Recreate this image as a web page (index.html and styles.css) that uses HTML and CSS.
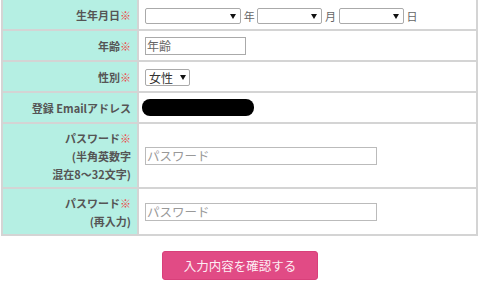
FILE: index.html
```html
<!DOCTYPE html>
<html lang="ja">
<head>
    <meta charset="UTF-8">
    <meta name="viewport" content="width=device-width, initial-scale=1.0">
    <title>会員登録</title>
    <link rel="stylesheet" href="styles.css">
</head>
<body>
    <form class="entry-form">
        <table class="form-table">
            <tr class="row-short">
                <th>生年月日<span class="req">※</span></th>
                <td>
                    <span class="select-wrap year"><select><option></option></select></span>
                    <span class="unit">年</span>
                    <span class="select-wrap month"><select><option></option></select></span>
                    <span class="unit">月</span>
                    <span class="select-wrap day"><select><option></option></select></span>
                    <span class="unit">日</span>
                </td>
            </tr>
            <tr class="row-short">
                <th>年齢<span class="req">※</span></th>
                <td><input type="text" class="input-age" value="年齢"></td>
            </tr>
            <tr class="row-short">
                <th>性別<span class="req">※</span></th>
                <td>
                    <span class="select-wrap gender"><select><option>女性</option><option>男性</option></select></span>
                </td>
            </tr>
            <tr class="row-short">
                <th>登録 Emailアドレス</th>
                <td><span class="masked"></span></td>
            </tr>
            <tr class="row-pass">
                <th>パスワード<span class="req">※</span><br>(半角英数字<br>混在8～32文字)</th>
                <td><input type="password" class="input-pass" placeholder="パスワード"></td>
            </tr>
            <tr class="row-repass">
                <th>パスワード<span class="req">※</span><br>(再入力)</th>
                <td><input type="password" class="input-pass" placeholder="パスワード"></td>
            </tr>
        </table>
        <div class="form-actions">
            <button type="submit" class="btn-confirm">入力内容を確認する</button>
        </div>
    </form>
</body>
</html>
```

FILE: styles.css
```css
body {
    margin: 0;
    background: #fff;
    font-family: "Noto Sans CJK JP", "Noto Sans", sans-serif;
    color: #555;
}
.form-table {
    width: 477px;
    margin: -2px 0 0 1px;
    border: 1px solid #d4d4d4;
    border-collapse: separate;
    border-spacing: 0;
    table-layout: fixed;
}
.form-table th,
.form-table td {
    border: 1px solid #d4d4d4;
    padding: 0;
    vertical-align: middle;
}
.form-table th {
    box-sizing: border-box;
    width: 136px;
    padding-right: 6px;
    background: #b5efe3;
    text-align: right;
    font-size: 11px;
    font-weight: bold;
    line-height: 18px;
    color: #555;
}
.form-table td {
    padding-left: 6px;
    font-size: 12px;
}
.row-short td { height: 29px; }
.row-pass td { height: 63px; }
.row-repass td { height: 45px; }
.req {
    color: #ee4444;
}
.select-wrap {
    position: relative;
    display: inline-block;
    vertical-align: middle;
}
.select-wrap select {
    appearance: none;
    -webkit-appearance: none;
    display: block;
    box-sizing: border-box;
    height: 16px;
    margin: 0;
    padding: 0 0 0 3px;
    border: 1px solid #aaa;
    border-radius: 2px;
    background: #fff;
    font-family: inherit;
    font-size: 12px;
    line-height: 14px;
    color: #333;
}
.select-wrap::after {
    content: "";
    position: absolute;
    right: 5px;
    top: 6px;
    border-left: 3px solid transparent;
    border-right: 3px solid transparent;
    border-top: 5px solid #111;
    pointer-events: none;
}
.select-wrap.year select { width: 96px; }
.select-wrap.month select { width: 65px; }
.select-wrap.day select { width: 65px; }
.select-wrap.gender select {
    width: 45px;
    height: 17px;
}
.select-wrap.gender::after { right: 4px; }
.unit {
    display: inline-block;
    vertical-align: middle;
    font-size: 11px;
    color: #666;
}
.input-age {
    box-sizing: border-box;
    display: block;
    width: 101px;
    height: 18px;
    margin: 0;
    padding: 0 1px;
    border: 1px solid #aaa;
    font-family: inherit;
    font-size: 12px;
    color: #666;
}
.input-pass {
    box-sizing: border-box;
    display: block;
    width: 232px;
    height: 18px;
    margin: 0;
    padding: 0 1px;
    border: 1px solid #bbb;
    font-family: inherit;
    font-size: 12.5px;
}
.input-pass::placeholder {
    color: #999;
}
.masked {
    display: block;
    width: 112px;
    height: 17px;
    margin-left: -3px;
    border-radius: 8px;
    background: #000;
}
.form-actions {
    display: flex;
    justify-content: center;
    padding-top: 15px;
}
.btn-confirm {
    width: 156px;
    height: 29px;
    border: 1px solid #d8407a;
    border-radius: 3px;
    background: #e14b85;
    color: #fdeef4;
    font-family: inherit;
    font-size: 12.5px;
    cursor: pointer;
}
```
